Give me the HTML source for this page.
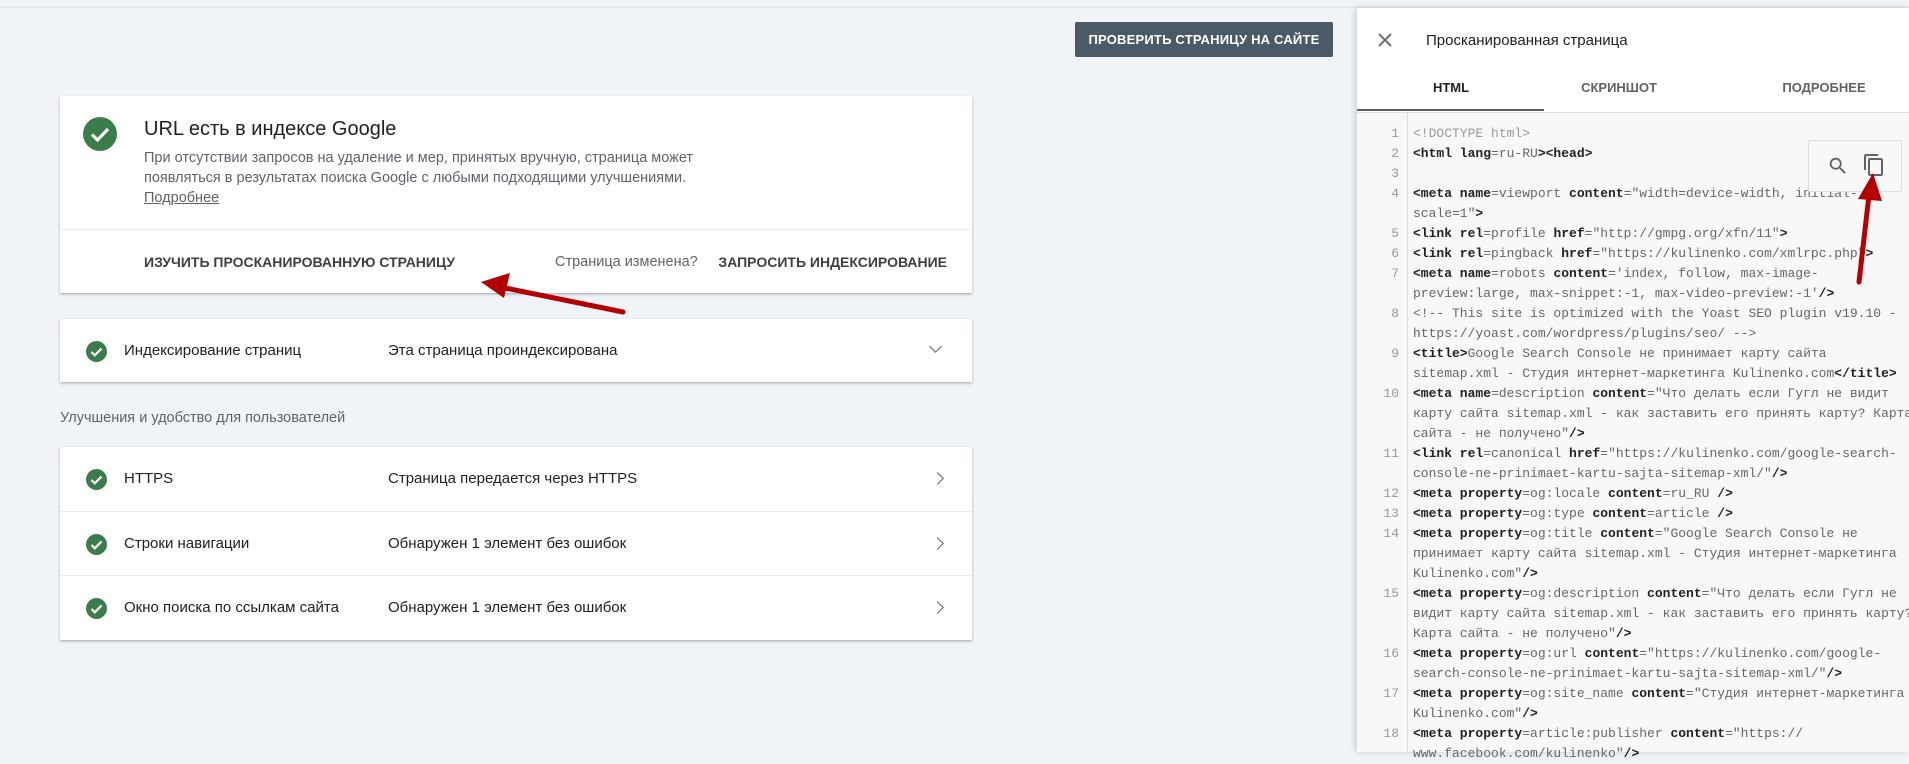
<!DOCTYPE html>
<html><head><meta charset="utf-8">
<style>
*{margin:0;padding:0;box-sizing:border-box}
body{width:1909px;height:752px;overflow:hidden;background:#f0f3f8;font-family:"Liberation Sans",sans-serif;color:#202124;position:relative}
.topline{position:absolute;left:0;top:6px;width:1909px;height:2px;background:#e4e7ec}
.btn{position:absolute;left:1075px;top:22px;width:258px;height:35px;background:#4c5a67;color:#fff;font-size:13px;font-weight:bold;display:flex;align-items:center;justify-content:center;border-radius:2px;letter-spacing:.2px}
.card{position:absolute;left:60px;width:912px;background:#fff;box-shadow:0 1px 2px rgba(0,0,0,.25),0 2px 4px rgba(0,0,0,.08)}
.chk{position:absolute;border-radius:50%;background:#3b7d4a}
.chk svg{position:absolute;left:0;top:0;width:100%;height:100%}
.abs{position:absolute;white-space:nowrap}
.row{position:absolute;left:0;width:912px;height:65px;border-top:1px solid #e8eaed}
.lbl{font-size:15px;color:#202124}
.chev{position:absolute;right:30px;width:9px;height:9px;border-right:1.6px solid #5f6368;border-bottom:1.6px solid #5f6368}
.panel{position:absolute;left:1357px;top:8px;width:552px;height:744px;background:#fff;box-shadow:-2px 0 6px rgba(0,0,0,.15)}
.tab{position:absolute;top:72px;font-size:13px;font-weight:bold;color:#5f6368;transform:translateX(-50%)}
.code{position:absolute;left:0;top:104px;width:552px;height:640px;background:#f8f8f8;border-top:1px solid #e0e0e0}
.gut{position:absolute;left:50px;top:0;width:1px;height:640px;background:#dadada}
.lines{position:absolute;left:0;top:11px;font-family:"Liberation Mono",monospace;font-size:13px;line-height:20px;color:#666}
.ln{display:flex}
.n{width:42px;text-align:right;color:#999;flex:none}
.t{padding-left:14px;white-space:pre;width:552px}
b{color:#202124}
</style></head><body>
<div class="topline"></div>
<div class="btn">ПРОВЕРИТЬ СТРАНИЦУ НА САЙТЕ</div>

<div class="card" style="top:96px;height:197px">
  <div class="chk" style="left:23px;top:21px;width:34px;height:34px"><svg viewBox="0 0 34 34"><path d="M9 17.5l5.5 5.5L25 12" fill="none" stroke="#fff" stroke-width="3.2"/></svg></div>
  <div class="abs" style="left:84px;top:22px;font-size:20px;color:#202124">URL есть в индексе Google</div>
  <div class="abs" style="left:84px;top:52px;font-size:14.5px;line-height:20px;color:#5f6368">При отсутствии запросов на удаление и мер, принятых вручную, страница может<br>появляться в результатах поиска Google с любыми подходящими улучшениями.<br><span style="text-decoration:underline">Подробнее</span></div>
  <div style="position:absolute;left:0;top:133px;width:912px;height:1px;background:#e8eaed"></div>
  <div class="abs" style="left:84px;top:158px;font-size:14px;font-weight:bold;color:#3c4043">ИЗУЧИТЬ ПРОСКАНИРОВАННУЮ СТРАНИЦУ</div>
  <div class="abs" style="left:495px;top:158px;font-size:14.5px;color:#5f6368">Страница изменена?</div>
  <div class="abs" style="right:25px;top:158px;font-size:14px;font-weight:bold;color:#3c4043">ЗАПРОСИТЬ ИНДЕКСИРОВАНИЕ</div>
</div>

<div class="card" style="top:319px;height:63px">
  <div class="chk" style="left:26px;top:22px;width:21px;height:21px"><svg viewBox="0 0 21 21"><path d="M5.5 11l3.3 3.3L15.5 7.5" fill="none" stroke="#fff" stroke-width="2.2"/></svg></div>
  <div class="abs lbl" style="left:64px;top:23px">Индексирование страниц</div>
  <div class="abs lbl" style="left:328px;top:23px">Эта страница проиндексирована</div>
  <div class="chev" style="top:23px;right:32px;transform:rotate(45deg)"></div>
</div>

<div class="abs" style="left:60px;top:410px;font-size:14.5px;color:#5f6368">Улучшения и удобство для пользователей</div>

<div class="card" style="top:447px;height:193px">
  <div class="row" style="top:0;border-top:none">
    <div class="chk" style="left:26px;top:22px;width:21px;height:21px"><svg viewBox="0 0 21 21"><path d="M5.5 11l3.3 3.3L15.5 7.5" fill="none" stroke="#fff" stroke-width="2.2"/></svg></div>
    <div class="abs lbl" style="left:64px;top:23px">HTTPS</div>
    <div class="abs lbl" style="left:328px;top:23px">Страница передается через HTTPS</div>
    <div class="chev" style="top:27px;transform:rotate(-45deg)"></div>
  </div>
  <div class="row" style="top:64px">
    <div class="chk" style="left:26px;top:22px;width:21px;height:21px"><svg viewBox="0 0 21 21"><path d="M5.5 11l3.3 3.3L15.5 7.5" fill="none" stroke="#fff" stroke-width="2.2"/></svg></div>
    <div class="abs lbl" style="left:64px;top:23px">Строки навигации</div>
    <div class="abs lbl" style="left:328px;top:23px">Обнаружен 1 элемент без ошибок</div>
    <div class="chev" style="top:27px;transform:rotate(-45deg)"></div>
  </div>
  <div class="row" style="top:128px">
    <div class="chk" style="left:26px;top:22px;width:21px;height:21px"><svg viewBox="0 0 21 21"><path d="M5.5 11l3.3 3.3L15.5 7.5" fill="none" stroke="#fff" stroke-width="2.2"/></svg></div>
    <div class="abs lbl" style="left:64px;top:23px">Окно поиска по ссылкам сайта</div>
    <div class="abs lbl" style="left:328px;top:23px">Обнаружен 1 элемент без ошибок</div>
    <div class="chev" style="top:27px;transform:rotate(-45deg)"></div>
  </div>
</div>

<div class="panel">
  <svg style="position:absolute;left:20px;top:24px" width="16" height="16" viewBox="0 0 16 16"><path d="M2 2L14 14M14 2L2 14" stroke="#5f6368" stroke-width="1.8"/></svg>
  <div class="abs" style="left:69px;top:24px;font-size:15px;color:#202124">Просканированная страница</div>
  <div class="tab" style="left:94px;color:#202124">HTML</div>
  <div class="tab" style="left:262px">СКРИНШОТ</div>
  <div class="tab" style="left:467px">ПОДРОБНЕЕ</div>
  <div style="position:absolute;left:0;top:101px;width:187px;height:2px;background:#5f6368"></div>
  <div class="code">
    <div class="gut"></div>
    <div class="lines">
<div class="ln"><span class="n">1</span><span class="t" style="color:#999">&lt;!DOCTYPE html&gt;</span></div>
<div class="ln"><span class="n">2</span><span class="t"><b>&lt;html lang</b>=ru-RU<b>&gt;&lt;head&gt;</b></span></div>
<div class="ln"><span class="n">3</span><span class="t"> </span></div>
<div class="ln"><span class="n">4</span><span class="t"><b>&lt;meta name</b>=viewport <b>content</b>="width=device-width, initial-</span></div>
<div class="ln"><span class="n"></span><span class="t">scale=1"<b>&gt;</b></span></div>
<div class="ln"><span class="n">5</span><span class="t"><b>&lt;link rel</b>=profile <b>href</b>="http://gmpg.org/xfn/11"<b>&gt;</b></span></div>
<div class="ln"><span class="n">6</span><span class="t"><b>&lt;link rel</b>=pingback <b>href</b>="https://kulinenko.com/xmlrpc.php"<b>&gt;</b></span></div>
<div class="ln"><span class="n">7</span><span class="t"><b>&lt;meta name</b>=robots <b>content</b>='index, follow, max-image-</span></div>
<div class="ln"><span class="n"></span><span class="t">preview:large, max-snippet:-1, max-video-preview:-1'<b>/&gt;</b></span></div>
<div class="ln"><span class="n">8</span><span class="t">&lt;!-- This site is optimized with the Yoast SEO plugin v19.10 -</span></div>
<div class="ln"><span class="n"></span><span class="t">https://yoast.com/wordpress/plugins/seo/ --&gt;</span></div>
<div class="ln"><span class="n">9</span><span class="t"><b>&lt;title&gt;</b>Google Search Console не принимает карту сайта</span></div>
<div class="ln"><span class="n"></span><span class="t">sitemap.xml - Студия интернет-маркетинга Kulinenko.com<b>&lt;/title&gt;</b></span></div>
<div class="ln"><span class="n">10</span><span class="t"><b>&lt;meta name</b>=description <b>content</b>="Что делать если Гугл не видит</span></div>
<div class="ln"><span class="n"></span><span class="t">карту сайта sitemap.xml - как заставить его принять карту? Карта</span></div>
<div class="ln"><span class="n"></span><span class="t">сайта - не получено"<b>/&gt;</b></span></div>
<div class="ln"><span class="n">11</span><span class="t"><b>&lt;link rel</b>=canonical <b>href</b>="https://kulinenko.com/google-search-</span></div>
<div class="ln"><span class="n"></span><span class="t">console-ne-prinimaet-kartu-sajta-sitemap-xml/"<b>/&gt;</b></span></div>
<div class="ln"><span class="n">12</span><span class="t"><b>&lt;meta property</b>=og:locale <b>content</b>=ru_RU <b>/&gt;</b></span></div>
<div class="ln"><span class="n">13</span><span class="t"><b>&lt;meta property</b>=og:type <b>content</b>=article <b>/&gt;</b></span></div>
<div class="ln"><span class="n">14</span><span class="t"><b>&lt;meta property</b>=og:title <b>content</b>="Google Search Console не</span></div>
<div class="ln"><span class="n"></span><span class="t">принимает карту сайта sitemap.xml - Студия интернет-маркетинга</span></div>
<div class="ln"><span class="n"></span><span class="t">Kulinenko.com"<b>/&gt;</b></span></div>
<div class="ln"><span class="n">15</span><span class="t"><b>&lt;meta property</b>=og:description <b>content</b>="Что делать если Гугл не</span></div>
<div class="ln"><span class="n"></span><span class="t">видит карту сайта sitemap.xml - как заставить его принять карту?</span></div>
<div class="ln"><span class="n"></span><span class="t">Карта сайта - не получено"<b>/&gt;</b></span></div>
<div class="ln"><span class="n">16</span><span class="t"><b>&lt;meta property</b>=og:url <b>content</b>="https://kulinenko.com/google-</span></div>
<div class="ln"><span class="n"></span><span class="t">search-console-ne-prinimaet-kartu-sajta-sitemap-xml/"<b>/&gt;</b></span></div>
<div class="ln"><span class="n">17</span><span class="t"><b>&lt;meta property</b>=og:site_name <b>content</b>="Студия интернет-маркетинга</span></div>
<div class="ln"><span class="n"></span><span class="t">Kulinenko.com"<b>/&gt;</b></span></div>
<div class="ln"><span class="n">18</span><span class="t"><b>&lt;meta property</b>=article:publisher <b>content</b>="https://</span></div>
<div class="ln"><span class="n"></span><span class="t">www.facebook.com/kulinenko"<b>/&gt;</b></span></div>
    </div>
    <div style="position:absolute;left:451px;top:27px;width:94px;height:52px;background:#f8f8f8;border:1px solid #ddd;border-radius:2px">
      <svg style="position:absolute;left:18px;top:14px" width="22" height="22" viewBox="0 0 24 24"><path d="M15.5 14h-.79l-.28-.27A6.47 6.47 0 0016 9.5 6.5 6.5 0 109.5 16c1.61 0 3.09-.59 4.23-1.57l.27.28v.79l5 4.99L20.49 19l-4.99-5zm-6 0C7.01 14 5 11.99 5 9.5S7.01 5 9.5 5 14 7.01 14 9.5 11.99 14 9.5 14z" fill="#5f6368"/></svg>
      <svg style="position:absolute;left:53px;top:12px" width="24" height="24" viewBox="0 0 24 24"><path d="M16 1H4c-1.1 0-2 .9-2 2v14h2V3h12V1zm3 4H8c-1.1 0-2 .9-2 2v14c0 1.1.9 2 2 2h11c1.1 0 2-.9 2-2V7c0-1.1-.9-2-2-2zm0 16H8V7h11v14z" fill="#5f6368"/></svg>
    </div>
  </div>
</div>

<svg style="position:absolute;left:0;top:0" width="1909" height="752">
  <path d="M623 312L505 288" stroke="#b30000" stroke-width="5" stroke-linecap="round"/>
  <path d="M481 282L510 273L504 298Z" fill="#b30000"/>
  <path d="M1859 282L1869 195" stroke="#b30000" stroke-width="5" stroke-linecap="round"/>
  <path d="M1873 173L1858 199L1882 201Z" fill="#b30000"/>
</svg>
</body></html>
